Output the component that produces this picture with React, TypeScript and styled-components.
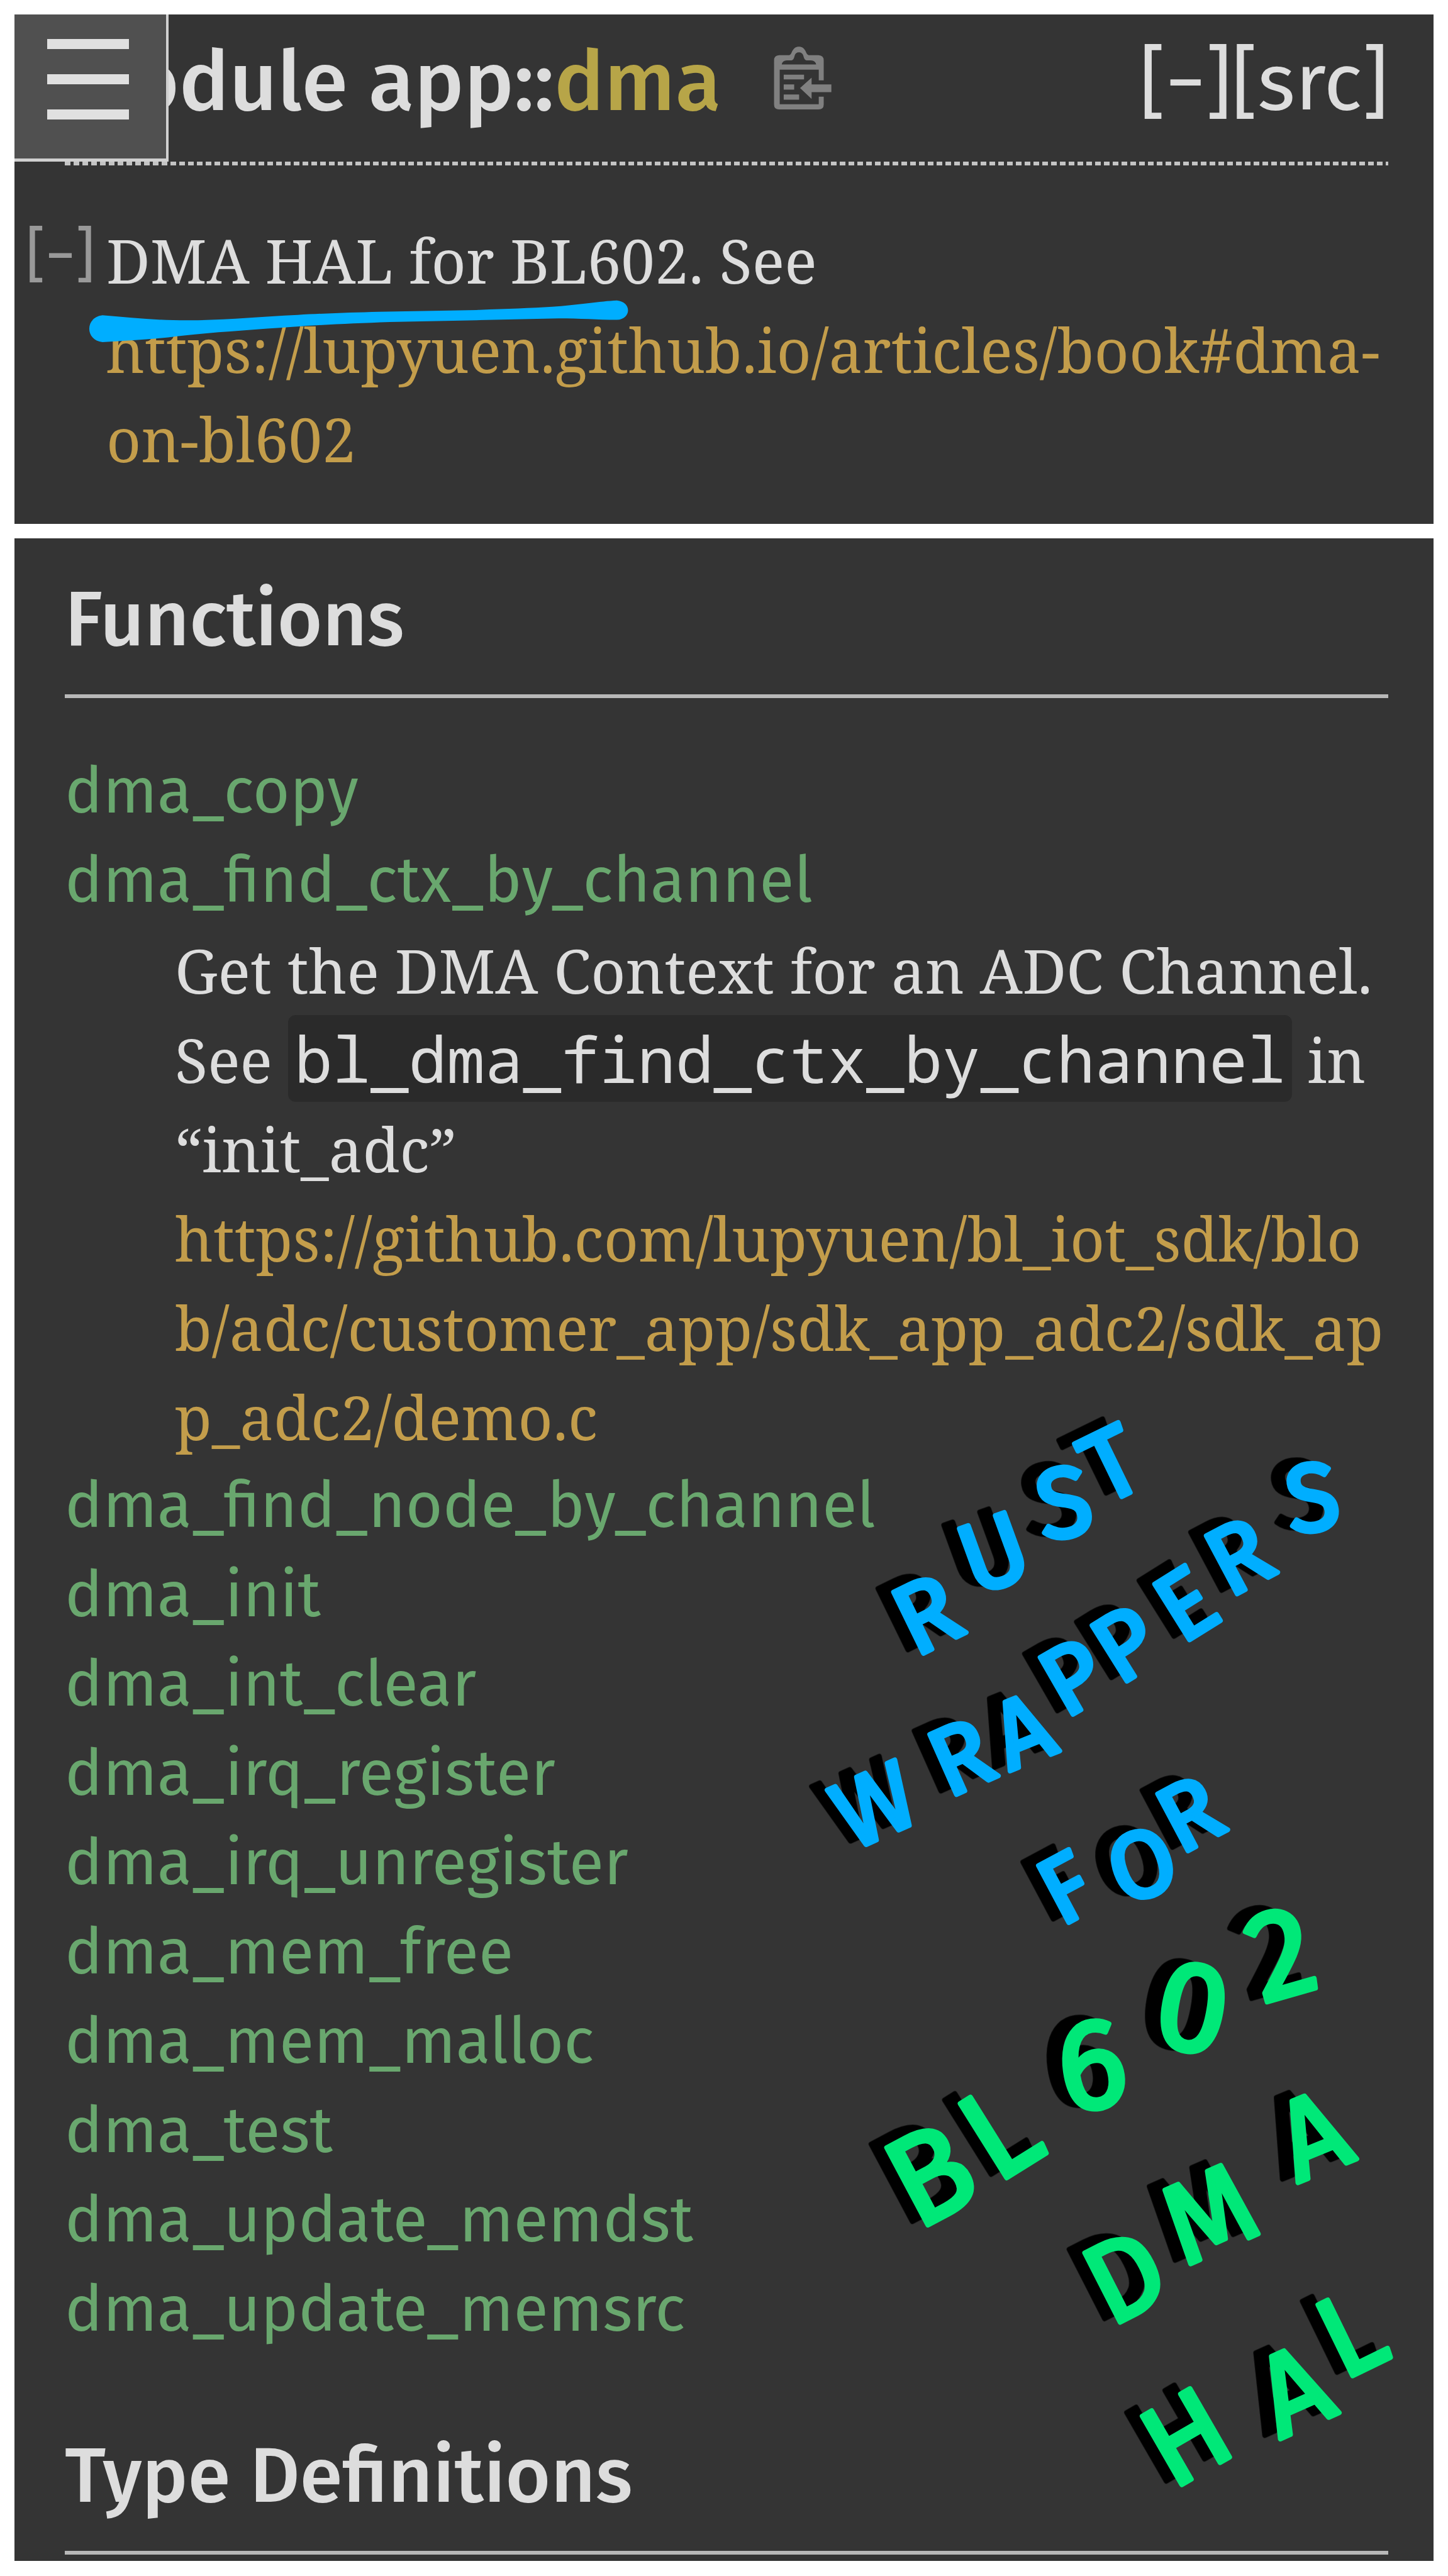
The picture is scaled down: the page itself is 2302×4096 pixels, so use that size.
import React from "react";
import styled, { createGlobalStyle } from "styled-components";

const SANS = '"Fira Sans", "Noto Sans", "Open Sans", sans-serif';
const SERIF = '"Noto Serif", "DejaVu Serif", "Liberation Serif", serif';
const MONO = '"Noto Sans Mono", "DejaVu Sans Mono", monospace';

const color = {
  page: "#ffffff",
  panel: "#343434",
  code: "#2a2a2a",
  text: "#dddddd",
  rule: "#b8b8b8",
  muted: "#999999",
  icon: "#808080",
  module: "#b7a548",
  fn: "#69a76e",
  link: "#c39d4b",
  blue: "#00aeff",
  green: "#00e878",
};

const GlobalStyle = createGlobalStyle`
  * { box-sizing: border-box; }
  body { margin: 0; background: ${color.page}; }
`;

const Page = styled.main`
  position: relative;
  display: flex;
  flex-direction: column;
  gap: 23px;
  padding: 23px 23px 24px;
  color: ${color.text};
`;

const Panel = styled.section`
  position: relative;
  background: ${color.panel};
`;

const Content = styled.div`
  padding: 55px 72px 10px 80px;
`;

const Header = styled.header`
  display: flex;
  justify-content: space-between;
  align-items: flex-start;
  margin: 0 72px 0 80px;
  padding: 28px 0 46px;
  font-family: ${SANS};
  line-height: 160px;
`;

const TitleGroup = styled.div`
  display: flex;
  align-items: flex-start;
  gap: 84px;
`;

const Title = styled.h1`
  margin: 0;
  font-size: 133px;
  font-weight: 500;
  white-space: nowrap;
`;

const PlainLink = styled.a`
  color: inherit;
  text-decoration: none;
`;

const ModuleLink = styled(PlainLink)`
  color: ${color.module};
`;

const IconButton = styled.button`
  display: flex;
  margin: 23px 0 0;
  padding: 0;
  border: 0;
  background: none;
`;

const PlainButton = styled.button`
  padding: 0;
  border: 0;
  background: none;
  color: inherit;
  font: inherit;
`;

const Tools = styled.div`
  display: flex;
  font-size: 128px;
  white-space: nowrap;
`;

const DottedRule = styled.div`
  height: 6px;
  margin: 0 72px 0 80px;
  background: repeating-linear-gradient(90deg, #c4c4c4 0 9px, transparent 9px 14px);
`;

const MenuButton = styled.button`
  position: absolute;
  top: 0;
  left: 0;
  display: flex;
  flex-direction: column;
  gap: 40px;
  width: 245px;
  height: 234px;
  padding: 39px 0 0 52px;
  border: solid #d0d0d0;
  border-width: 0 4px 5px 0;
  background: #505050;
`;

const MenuBar = styled.span`
  width: 130px;
  height: 16px;
  background: #e0e0e0;
`;

const DocBlock = styled.div`
  display: grid;
  grid-template-columns: 128px 1fr;
  padding: 80px 60px 64px 18px;
`;

const Toggle = styled(PlainButton)`
  align-self: start;
  color: ${color.muted};
  font-family: ${SANS};
  font-size: 96px;
  line-height: 126px;
  text-align: left;
  white-space: nowrap;
`;

const Prose = styled.p`
  margin: 0;
  font-family: ${SERIF};
  font-size: 96px;
  line-height: 142px;
`;

const DocLink = styled.a`
  color: ${color.link};
  text-decoration: none;
  overflow-wrap: anywhere;
`;

const SectionTitle = styled.h2`
  margin: 0;
  padding-bottom: 45px;
  border-bottom: 6px solid ${color.rule};
  font-family: ${SANS};
  font-size: 123px;
  font-weight: 500;
  line-height: 148px;
`;

const ItemList = styled.dl`
  margin: 78px 0 119px;
`;

const ItemName = styled.dt`
  font-family: ${SANS};
  font-size: 101px;
  line-height: 142px;
`;

const FnLink = styled(PlainLink)`
  color: ${color.fn};
`;

const ItemDoc = styled.dd`
  margin: 0 -6px 0 175px;
  font-family: ${SERIF};
  font-size: 96px;
  line-height: 142px;
`;

const Code = styled.code`
  padding: 0 10px;
  border-radius: 12px;
  background: ${color.code};
  font-family: ${MONO};
  font-size: 101px;
  line-height: 1;
`;

const Ink = styled.svg`
  position: absolute;
  top: 0;
  left: 0;
  width: 100%;
  pointer-events: none;
`;

const Handwriting = styled.text<{ $ink: string; $size: number }>`
  font-family: ${SANS};
  font-weight: 400;
  font-size: ${(p) => p.$size}px;
  fill: ${(p) => p.$ink};
  stroke: ${(p) => p.$ink};
  stroke-width: 14px;
  stroke-linejoin: round;
  filter: drop-shadow(-44px -10px 0 #000);
`;

/* Advance width of each capital, in em. */
const advance: Record<string, number> = {
  R: 0.6, U: 0.65, S: 0.55, T: 0.54, W: 0.88, A: 0.58, P: 0.59, E: 0.54,
  F: 0.51, O: 0.69, B: 0.62, L: 0.5, "6": 0.57, "0": 0.6, "2": 0.52,
  D: 0.65, M: 0.79, H: 0.68,
};

/* Letter, centre x, centre y, tilt in degrees. */
type Glyph = [string, number, number, number];

function HandWord({ letters, ink, size }: { letters: Glyph[]; ink: string; size: number }) {
  const origin = letters.map(([c, cx, cy, tilt]) => {
    const a = (tilt * Math.PI) / 180;
    const dx = (-advance[c] * size) / 2;
    const dy = 0.345 * size;
    return [
      Math.round(cx + dx * Math.cos(a) - dy * Math.sin(a)),
      Math.round(cy + dx * Math.sin(a) + dy * Math.cos(a)),
    ];
  });
  return (
    <Handwriting
      $ink={ink}
      $size={size}
      x={origin.map((o) => o[0]).join(" ")}
      y={origin.map((o) => o[1]).join(" ")}
      rotate={letters.map((l) => l[3]).join(" ")}
    >
      {letters.map((l) => l[0]).join("")}
    </Handwriting>
  );
}

const words: { ink: string; size: number; letters: Glyph[] }[] = [
  { ink: color.blue, size: 280, letters: [["R", 2620, 4566, -26], ["U", 2808, 4393, -20], ["S", 3010, 4250, -10], ["T", 3146, 4140, -26]] },
  { ink: color.blue, size: 270, letters: [["W", 2480, 5104, -24], ["R", 2717, 4970, -24], ["A", 2894, 4895, -22], ["P", 3034, 4744, -30], ["P", 3183, 4650, -32], ["E", 3354, 4536, -32], ["R", 3504, 4402, -28], ["S", 3713, 4236, -8]] },
  { ink: color.blue, size: 265, letters: [["F", 3017, 5340, -28], ["O", 3230, 5275, -20], ["R", 3364, 5131, -28]] },
  { ink: color.green, size: 360, letters: [["B", 2633, 6150, -28], ["L", 2828, 6028, -32], ["6", 3094, 5839, -8], ["0", 3382, 5678, 10], ["2", 3627, 5523, -16]] },
  { ink: color.green, size: 320, letters: [["D", 3183, 6439, -27], ["M", 3421, 6261, -24], ["A", 3715, 6039, -22]] },
  { ink: color.green, size: 325, letters: [["H", 3355, 6894, -30], ["A", 3660, 6760, -24], ["L", 3821, 6600, -26]] },
];

function Annotations() {
  return (
    <Ink viewBox="0 0 4096 7287">
      <path
        fill={color.blue}
        d="M290 892C380 900 460 908 560 906C660 904 740 896 842 891C930 886 1000 884 1072 882L1348 877C1430 874 1500 872 1562 868C1630 863 1700 852 1745 850C1787 854 1787 902 1745 905C1690 905 1640 901 1580 901L1348 906L1103 911C1000 915 920 918 827 925C730 932 640 938 551 946C490 952 440 960 383 962L290 968C240 962 240 898 290 892Z"
      />
      {words.map((w, i) => (
        <HandWord key={i} {...w} />
      ))}
    </Ink>
  );
}

function ClipboardIcon() {
  return (
    <svg width="93" height="101" viewBox="125 35 495 540" fill={color.icon} aria-hidden="true">
      <path
        fillRule="evenodd"
        d="M170 108H255Q270 105 276 86C292 50 312 37 338 37S386 50 400 86Q406 105 420 108H505Q549 110 549 152V322H507V232H175V525H507V462H549V528Q549 570 505 570H170Q127 570 127 528V152Q127 110 170 108ZM192 188H485Q478 152 440 152H404Q384 150 378 120C372 92 356 84 338 84S306 92 300 120Q294 150 274 152H236Q198 152 192 188Z"
      />
      <path d="M209 274H382V314H209ZM209 357H298V401H209ZM209 443H340V487H209ZM348 388L446 300V357H614V422H446V480Z" />
    </svg>
  );
}

const functions: { name: string; doc?: React.ReactNode }[] = [
  { name: "dma_copy" },
  {
    name: "dma_find_ctx_by_channel",
    doc: (
      <>
        Get the DMA Context for an ADC Channel. See <Code>bl_dma_find_ctx_by_channel</Code> in “init_adc”
        <br />
        <DocLink href="#demo">
          https://github.com/lupyuen/bl_iot_sdk/blo<wbr />b/adc/customer_app/sdk_app_adc2/sdk_ap<wbr />p_adc2/demo.c
        </DocLink>
      </>
    ),
  },
  { name: "dma_find_node_by_channel" },
  { name: "dma_init" },
  { name: "dma_int_clear" },
  { name: "dma_irq_register" },
  { name: "dma_irq_unregister" },
  { name: "dma_mem_free" },
  { name: "dma_mem_malloc" },
  { name: "dma_test" },
  { name: "dma_update_memdst" },
  { name: "dma_update_memsrc" },
];

export default function App() {
  return (
    <>
      <GlobalStyle />
      <Page>
        <Panel>
          <Header>
            <TitleGroup>
              <Title>
                Module <PlainLink href="#app">app</PlainLink>::<ModuleLink href="#dma">dma</ModuleLink>
              </Title>
              <IconButton type="button" aria-label="Copy item path">
                <ClipboardIcon />
              </IconButton>
            </TitleGroup>
            <Tools>
              <PlainButton type="button">[−]</PlainButton>
              <PlainLink href="#src">[src]</PlainLink>
            </Tools>
          </Header>
          <DottedRule />
          <DocBlock>
            <Toggle type="button">[−]</Toggle>
            <Prose>
              DMA HAL for BL602. See
              <br />
              <DocLink href="#book">https://lupyuen.github.io/articles/book#dma-on-bl602</DocLink>
            </Prose>
          </DocBlock>
          <MenuButton type="button" aria-label="Menu">
            <MenuBar />
            <MenuBar />
            <MenuBar />
          </MenuButton>
        </Panel>
        <Panel>
          <Content>
            <SectionTitle>Functions</SectionTitle>
            <ItemList>
              {functions.map((f) => (
                <React.Fragment key={f.name}>
                  <ItemName>
                    <FnLink href={`#${f.name}`}>{f.name}</FnLink>
                  </ItemName>
                  {f.doc && <ItemDoc>{f.doc}</ItemDoc>}
                </React.Fragment>
              ))}
            </ItemList>
            <SectionTitle>Type Definitions</SectionTitle>
          </Content>
        </Panel>
        <Annotations />
      </Page>
    </>
  );
}
